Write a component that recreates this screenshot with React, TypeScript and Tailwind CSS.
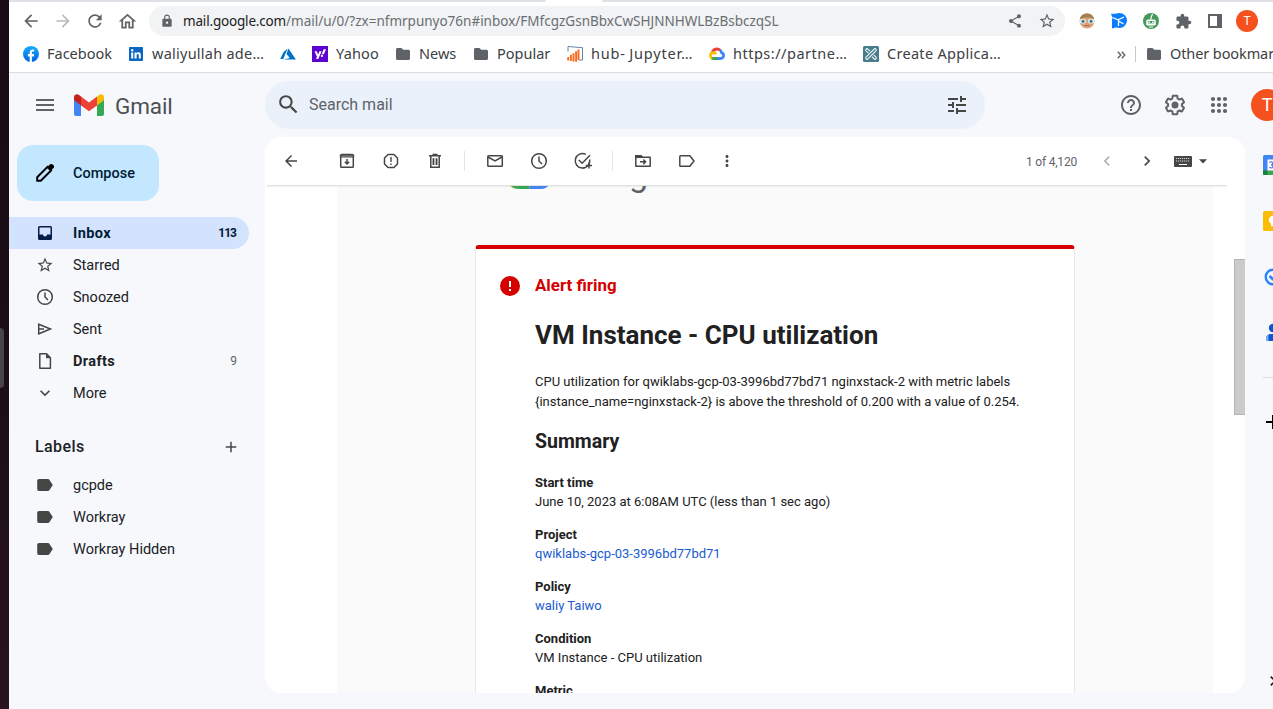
import type { ReactNode } from "react";
import {
  MdArrowBack, MdArrowForward, MdRefresh, MdOutlineHome, MdLock, MdShare, MdStarBorder, MdExtension,
  MdMenu, MdSearch, MdTune, MdHelpOutline, MdApps, MdSchedule, MdMoreVert, MdChevronLeft,
  MdChevronRight, MdExpandMore, MdAdd,
} from "react-icons/md";

function Glyph({ size = 20, className = "", children }: { size?: number; className?: string; children: ReactNode }) {
  return (
    <svg width={size} height={size} viewBox="0 0 20 20" className={`shrink-0 ${className}`} fill="none" stroke="currentColor" strokeWidth="1.5">
      {children}
    </svg>
  );
}

/* ---------- browser chrome ---------- */

const FacebookIcon = () => (
  <svg width="16" height="16" viewBox="0 0 16 16">
    <defs>
      <linearGradient id="fb" x1="0" y1="0" x2="0" y2="1">
        <stop offset="0" stopColor="#18acfe" />
        <stop offset="1" stopColor="#0163e0" />
      </linearGradient>
    </defs>
    <circle cx="8" cy="8" r="8" fill="url(#fb)" />
    <path d="M6.7 15.9V10.4H4.9V8h1.8V6.6c0-2.2 1.2-3.2 2.9-3.2.7 0 1.3.1 1.5.1v2H10c-.9 0-1.1.5-1.1 1.2V8h2.2l-.4 2.4H8.9v5.5z" fill="#fff" />
  </svg>
);
const LinkedInIcon = () => (
  <svg width="16" height="16" viewBox="0 0 16 16">
    <rect x="1" y="1" width="14" height="14" rx="1" fill="#0a66c2" />
    <path d="M3.2 6.4h2v6.2h-2zM6.5 6.4h1.9v.9c.4-.7 1.1-1.1 2-1.1 1.9 0 2.4 1.2 2.4 2.9v3.5h-2V9.5c0-.8-.1-1.6-1-1.6s-1.2.7-1.2 1.6v3.1H6.5z" fill="#fff" />
    <circle cx="4.2" cy="4.2" r="1.2" fill="#fff" />
  </svg>
);
const AzureIcon = () => (
  <svg width="16" height="16" viewBox="0 0 16 16">
    <path d="M7.6 2.4L3.6 6 .2 13h3.1z" fill="#0072c6" />
    <path d="M8.400 2.400L6.5 8l3.300 4.100-6.300 1.400H15.900z" fill="#0072c6" />
  </svg>
);
const YahooIcon = () => (
  <svg width="16" height="16" viewBox="0 0 16 16">
    <rect width="16" height="16" fill="#5f01d1" />
    <path d="M2.5 5.300h2.200l1.400 3.200 1.300-3.200h2.200l-3.300 7.600H4.100l.9-2.100zM11.600 3.300h2.400l-2.100 4.900H9.700z" fill="#fff" />
    <circle cx="9.900" cy="9.900" r="1.100" fill="#fff" />
  </svg>
);
const HubIcon = () => (
  <svg width="16" height="16" viewBox="0 0 16 16">
    <path d="M1 5.500V.5L15.500 1.700v12.300h-3.500" fill="none" stroke="#6b83a3" strokeWidth="1" />
    <path d="M1.200 11v3.500M3.900 8.800v6.200M6.500 7.300v8.200M9.100 5.300V15.700M11.500 3.500v10.500" stroke="#f96a1b" strokeWidth="1.900" />
  </svg>
);
const CloudIcon = () => (
  <svg width="16" height="16" viewBox="0 0 16 16" fill="none" strokeWidth="2.800">
    <path d="M3.300 6.600C3.900 4.400 5.800 3 8 3c1.300 0 2.400.5 3.300 1.300" stroke="#ea4335" />
    <path d="M11.100 4c.9.800 1.400 1.700 1.600 2.900 1.100.3 1.900 1.200 1.900 2.500 0 1.600-1.200 3.100-3 3.100H8" stroke="#4285f4" />
    <path d="M8 12.500H4.300c-.7 0-1.200-.2-1.700-.6" stroke="#34a853" />
    <path d="M3 12.200C1.900 11.600 1.500 10.600 1.500 9.600c0-1.700 1.300-3 3-3 1.200 0 2 .5 2.600 1.400" stroke="#fbbc05" />
  </svg>
);
const CreateIcon = () => (
  <svg width="16" height="16" viewBox="0 0 16 16">
    <rect width="16" height="16" rx="1.500" fill="#477d8c" />
    <g strokeLinecap="round" fill="none">
      <path d="M4 4l8 8" stroke="#fff" strokeWidth="3.600" />
      <path d="M4 4l8 8" stroke="#477d8c" strokeWidth="1.600" />
      <path d="M12 4l-8 8" stroke="#477d8c" strokeWidth="5" />
      <path d="M12 4l-8 8" stroke="#fff" strokeWidth="3.600" />
      <path d="M12 4l-8 8" stroke="#477d8c" strokeWidth="1.600" />
    </g>
  </svg>
);
const Folder = () => (
  <svg width="16" height="16" viewBox="0 0 16 16">
    <path d="M1 3.600C1 2.700 1.700 2 2.500 2h4L8.200 3.700h5.300c.8 0 1.500.7 1.500 1.500v7.300c0 .8-.7 1.500-1.500 1.500h-11C1.700 14 1 13.300 1 12.500z" fill="#5f6368" />
  </svg>
);

const bookmarks = [
  { icon: <FacebookIcon />, text: "Facebook", w: "w-[105px]", t: "" },
  { icon: <LinkedInIcon />, text: "waliyullah ade…", w: "w-[152px]", t: "tracking-[0.25px]" },
  { icon: <AzureIcon />, text: "", w: "w-[32px]", t: "" },
  { icon: <YahooIcon />, text: "Yahoo", w: "w-[83px]", t: "tracking-[0.15px]" },
  { icon: <Folder />, text: "News", w: "w-[78px]", t: "" },
  { icon: <Folder />, text: "Popular", w: "w-[94px]", t: "" },
  { icon: <HubIcon />, text: "hub- Jupyter…", w: "w-[142px]", t: "tracking-[0.8px] [word-spacing:-1px]" },
  { icon: <CloudIcon />, text: "https://partne…", w: "w-[154px]", t: "tracking-[0.5px]" },
  { icon: <CreateIcon />, text: "Create Applica…", w: "w-[150px]", t: "tracking-[0.3px]" },
];

function Browser() {
  return (
    <header className="h-[73px] border-b border-[#d9dbdf] bg-white font-['Noto_Sans',sans-serif]">
      <div className="flex h-[2px] justify-between">
        <div className="w-[537px] rounded-br-[2px] bg-[#dee1e6]" />
        <div className="w-[671px] rounded-bl-[2px] bg-[#dee1e6]" />
      </div>
      <div className="flex h-[38px] items-center pl-3 text-[#5f6368]">
        <div className="flex w-[128px] items-center gap-3">
          <MdArrowBack size={20} />
          <MdArrowForward size={20} className="text-[#babcbe]" />
          <MdRefresh size={20} />
          <MdOutlineHome size={21} />
        </div>
        <div className="flex h-[30px] w-[916px] items-center rounded-full bg-[#f1f3f4] pl-[11px] pr-[9px]">
          <MdLock size={14} className="shrink-0" />
          <div className="ml-[9px] flex-1 whitespace-nowrap text-[13.5px] leading-5 text-[#6a6e73]">
            <span className="tracking-[-0.18px] text-[#202124]">mail.google.com</span>
            <span>/mail/u/0/?zx=nfmrpunyo76n#inbox/FMfcgzGsnBbxCwSHJNNHWLBzBsbczqSL</span>
          </div>
          <MdShare size={16} className="mr-[15px]" />
          <MdStarBorder size={18} />
        </div>
        <div className="ml-[14px] flex items-center gap-4">
          <svg width="16" height="16" viewBox="0 0 16 16">
            <circle cx="8" cy="8" r="7.500" fill="#d9a07c" />
            <path d="M.8 6C1.500 2.500 4.500.4 8 .4S14.500 2.500 15.200 6L11 4.500H5z" fill="#a08050" />
            <rect x=".5" y="6" width="6.500" height="4.600" rx="2" fill="#dff0f2" />
            <rect x="9" y="6" width="6.500" height="4.600" rx="2" fill="#dff0f2" />
            <circle cx="4" cy="8.300" r="1.500" fill="#42707c" />
            <circle cx="12" cy="8.300" r="1.500" fill="#42707c" />
            <path d="M5.500 12.500h5" stroke="#b3664c" />
          </svg>
          <svg width="16" height="16" viewBox="0 0 16 16">
            <circle cx="8.500" cy="7.500" r="7.500" fill="#0a7cff" />
            <path d="M0 .8h6v4H1.500zM1 8h5l-1 6.500L1 15.500z" fill="#0a7cff" />
            <path d="M1.500 4.500l5.500 2.300 6-2.800M7.500 7v6M7.500 8l5 3" stroke="#fff" strokeWidth="1.300" fill="none" />
          </svg>
          <svg width="16" height="16" viewBox="0 0 16 16">
            <circle cx="8" cy="8" r="8" fill="#439a5a" />
            <rect x="3.200" y="6.500" width="9.600" height="6" rx="1.500" fill="#fff" />
            <path d="M8 6.500V4.500L9.500 1" stroke="#fff" strokeWidth="1.200" fill="none" />
            <path d="M4.800 8h6.400v2.400H4.800z" fill="#439a5a" />
            <path d="M5.500 8.500h1.400v1.400H5.500zM9.100 8.500h1.400v1.400H9.100z" fill="#fff" />
            <path d="M6 14h4" stroke="#fff" />
          </svg>
          <MdExtension size={17} className="-mx-[.5px]" />
          <svg width="16" height="16" viewBox="0 0 16 16">
            <path d="M1 1h14v14H1zM3 3v10h7V3z" fill="#5f6368" fillRule="evenodd" />
          </svg>
          <div className="-ml-[3px] flex size-[22px] items-center justify-center rounded-full bg-[#f4511e] font-[Roboto] text-[12px] leading-none text-white">T</div>
        </div>
      </div>
      <div className="flex h-[28px] items-center pl-[14px] text-[14.5px] text-[#3c4043]">
        {bookmarks.map((b, i) => (
          <div key={i} className={`flex shrink-0 items-center gap-2 whitespace-nowrap ${b.w}`}>
            {b.icon}
            <span className={b.t}>{b.text}</span>
          </div>
        ))}
        <svg width="9" height="8" viewBox="0 0 9 8" className="ml-[104px] mt-px shrink-0" fill="none" stroke="#5f6368" strokeWidth="1.400">
          <path d="M.8.800L3.800 4 .8 7.200M4.800.800L7.800 4 4.800 7.200" />
        </svg>
        <div className="ml-[9px] h-4 w-px shrink-0 bg-[#c6c9cc]" />
        <div className="ml-[10px] flex shrink-0 items-center gap-2 whitespace-nowrap tracking-[-0.1px]">
          <Folder />
          Other bookmarks
        </div>
      </div>
    </header>
  );
}

/* ---------- mail header ---------- */

const GmailMark = () => (
  <svg width="30" height="22" viewBox="0 0 30 22">
    <path d="M0 5h7V22H2a2 2 0 0 1-2-2z" fill="#4285f4" />
    <path d="M23 5h7V20a2 2 0 0 1-2 2h-5z" fill="#34a853" />
    <path d="M23 2.500l2-1.500c2-1.500 5-.5 5 2.200V6l-7 5.500z" fill="#fbbc04" />
    <path d="M7 11.500v-9L15 8.500l8-6v9L15 17.300z" fill="#ea4335" />
    <path d="M0 3.200C0 .5 3 -.5 5 1l2 1.500v9L0 6z" fill="#c5221f" />
  </svg>
);

const Gear = () => (
  <svg width="24" height="24" viewBox="0 0 24 24" fill="#5f6368">
    <path d="M13.850 22.250h-3.700c-.74 0-1.360-.54-1.450-1.270l-.27-1.890c-.27-.14-.53-.29-.79-.46l-1.800.720c-.7.260-1.470-.030-1.810-.650L2.200 15.530c-.35-.66-.2-1.440.36-1.880l1.530-1.190c-.01-.15-.02-.3-.02-.46 0-.15.010-.31.020-.46l-1.520-1.190c-.59-.45-.74-1.260-.37-1.880l1.850-3.190c.34-.62 1.110-.9 1.790-.63l1.810.73c.26-.17.52-.32.78-.46l.27-1.910c.09-.7.710-1.250 1.440-1.250h3.700c.74 0 1.360.54 1.450 1.270l.27 1.890c.27.14.53.29.79.46l1.800-.72c.71-.26 1.480.030 1.820.650l1.840 3.180c.36.66.2 1.440-.36 1.880l-1.520 1.190c.1.150.2.300.2.460s-.1.310-.2.460l1.520 1.190c.56.450.72 1.230.37 1.860l-1.860 3.220c-.34.62-1.110.9-1.800.63l-1.800-.72c-.26.17-.52.32-.78.460l-.27 1.910c-.1.680-.72 1.220-1.460 1.220zm-3.230-2h2.760l.37-2.550.53-.22c.44-.18.88-.44 1.340-.78l.45-.34 2.380.96 1.380-2.400-2.030-1.580.070-.56c.03-.26.060-.51.060-.78s-.03-.53-.06-.78l-.07-.56 2.030-1.580-1.390-2.400-2.390.96-.45-.35c-.42-.32-.87-.58-1.330-.77l-.52-.22-.37-2.550h-2.760l-.37 2.550-.53.210c-.44.190-.88.440-1.340.790l-.45.330-2.380-.95-1.390 2.390 2.030 1.580-.07.560a7 7 0 0 0-.06.790c0 .26.020.53.060.78l.07.560-2.030 1.580 1.380 2.400 2.390-.96.450.35c.43.330.86.580 1.330.77l.53.220z" />
    <circle cx="12" cy="12" r="3.500" />
  </svg>
);

function MailHeader() {
  return (
    <div className="flex h-16 items-center text-[#5f6368]">
      <div className="flex w-[256px] shrink-0 items-center pl-6">
        <MdMenu size={24} />
        <div className="ml-[17px] flex items-center gap-[11px]">
          <GmailMark />
          <span className="pt-px text-[22.5px] leading-6 tracking-[-0.1px] text-[#4d5054]">Gmail</span>
        </div>
      </div>
      <div className="flex h-12 w-[720px] shrink-0 items-center rounded-full bg-[#eaf1fb] pl-[11px] pr-4 text-[#444746]">
        <MdSearch size={25} className="-mt-px" />
        <span className="ml-2 flex-1 text-base leading-6 text-[#5f6368]">Search mail</span>
        <MdTune size={24} className="-mt-px" />
      </div>
      <div className="ml-[134px] flex shrink-0 items-center gap-5 text-[#5f6368]">
        <MdHelpOutline size={24} />
        <Gear />
        <svg width="24" height="24" viewBox="0 0 24 24" fill="currentColor">
          {[6, 12, 18].map((y) => [6, 12, 18].map((x) => <circle key={`${x}-${y}`} cx={x} cy={y} r="2.100" />))}
        </svg>
        <div className="flex size-8 items-center justify-center rounded-full bg-[#f4511e] text-[18px] leading-none text-white">T</div>
      </div>
    </div>
  );
}

/* ---------- sidebar ---------- */

const InboxIcon = () => (
  <svg width="20" height="20" viewBox="0 0 20 20">
    <path d="M4.500 3h11A1.500 1.500 0 0 1 17 4.500v11a1.500 1.500 0 0 1-1.500 1.500h-11A1.500 1.500 0 0 1 3 15.500v-11A1.500 1.500 0 0 1 4.500 3zm0 1.500V11.500H8c0 1.100.9 2 2 2s2-.9 2-2h3.500V4.500z" fill="#041e49" fillRule="evenodd" />
  </svg>
);
const ClockIcon = () => (
  <Glyph>
    <circle cx="10" cy="10" r="7.300" />
    <path d="M10 5.500V10l3 3" />
  </Glyph>
);
const SendIcon = () => (
  <Glyph>
    <path d="M3.700 5.200L15.500 10 3.700 14.800z M4 10h5" />
  </Glyph>
);
const FileIcon = () => (
  <Glyph>
    <path d="M4.800 2.800h6.700l3.900 4v10.400H4.800z" strokeLinejoin="round" />
    <path d="M11 2.500V7.300h4.700z" fill="currentColor" stroke="none" />
  </Glyph>
);

const folders = [
  { icon: <InboxIcon />, name: "Inbox", count: "113", kind: "active" },
  { icon: <MdStarBorder size={18} className="mx-px" />, name: "Starred", count: "", kind: "" },
  { icon: <ClockIcon />, name: "Snoozed", count: "", kind: "" },
  { icon: <SendIcon />, name: "Sent", count: "", kind: "" },
  { icon: <FileIcon />, name: "Drafts", count: "9", kind: "bold" },
  { icon: <MdExpandMore size={20} />, name: "More", count: "", kind: "" },
];

function Sidebar() {
  return (
    <nav className="w-[256px] shrink-0 text-[14.5px] text-[#202124]">
      <div className="ml-2 mt-2 flex h-14 w-[142px] items-center rounded-2xl bg-[#c2e7ff] pl-[18px]">
        <svg width="20" height="20" viewBox="0 0 20 20" fill="none">
          <path d="M2.200 14.200L12.500 3.900l3.600 3.600L5.800 17.800H2.200z" stroke="#000" strokeWidth="2" />
          <path d="M11.800 4.600l3-3c1-1 2.300-.7 3 0l.7.700c.8.800.8 2 0 2.800l-3 3z" fill="#000" />
        </svg>
        <span className="ml-[18px] pt-0.5 font-medium text-[#001d35]">Compose</span>
      </div>
      <ul className="mt-4">
        {folders.map((f) => (
          <li
            key={f.name}
            className={`flex h-8 w-[240px] items-center rounded-r-full pl-[26px] pr-3 ${f.kind === "active" ? "bg-[#d3e3fd] text-[#001d35]" : "text-[#202124]"}`}
          >
            <span className="flex w-[38px] text-[#444746]">{f.icon}</span>
            <span className={`flex-1 pt-0.5 ${f.kind ? "font-bold tracking-[0.4px]" : ""}`}>{f.name}</span>
            <span className={`text-xs ${f.kind === "active" ? "pr-px font-bold tracking-[-1px]" : "text-[#5f6368]"}`}>{f.count}</span>
          </li>
        ))}
      </ul>
      <div className="mt-[22px] flex h-[32px] items-center justify-between pl-[26px] pr-[9px]">
        <span className="text-base font-medium tracking-[0.4px]">Labels</span>
        <MdAdd size={18} className="mr-4 text-[#444746]" />
      </div>
      <ul className="mt-[6px]">
        {["gcpde", "Workray", "Workray Hidden"].map((l) => (
          <li key={l} className="flex h-8 items-center pl-[26px]">
            <svg width="20" height="20" viewBox="0 0 20 20">
              <path d="M4 4h9c.6 0 1.100.3 1.400.7L17.800 10l-3.400 5.300c-.3.400-.8.700-1.400.7H4a2 2 0 0 1-1.800-2V6C2.200 4.900 3 4 4 4z" fill="#444746" />
            </svg>
            <span className="ml-[18px] pt-0.5">{l}</span>
          </li>
        ))}
      </ul>
    </nav>
  );
}

/* ---------- message ---------- */

const Archive = () => (
  <Glyph>
    <path d="M3.700 6v9.500c0 .4.300.8.800.8h11c.4 0 .8-.4.800-.8V6" />
    <path d="M3.500 6V4.500l1-1h11l1 1V6" strokeLinejoin="round" />
    <path d="M3.500 6h13V4h-13z" fill="currentColor" fillOpacity=".5" strokeWidth="1" />
    <path d="M10 8v4M7.800 10.700L10 13l2.200-2.300" />
  </Glyph>
);
const Spam = () => (
  <Glyph>
    <path d="M7 3.500h6L16.500 7v6L13 16.500H7L3.500 13V7z" strokeLinejoin="round" />
    <path d="M10 6v5M10 12.500V14" strokeWidth="1.400" />
  </Glyph>
);
const Trash = () => (
  <Glyph>
    <path d="M4 4.700h12M7.500 3.500h5M5.800 5v11.200h8.400V5M8.300 7.300v6.700M11.700 7.300v6.700" />
    <path d="M8.300 7.300h3.400v6.700H8.300z" fill="currentColor" fillOpacity=".35" stroke="none" />
  </Glyph>
);
const Mail = () => (
  <Glyph>
    <rect x="2.800" y="4.700" width="14.500" height="10.600" rx=".8" />
    <path d="M3 6l7 4 7-4" />
  </Glyph>
);
const AddTask = () => (
  <Glyph>
    <path d="M16.700 8.500A7.300 7.300 0 1 1 12.800 3.300M9.600 17.200c.9 0 1.600-.1 2.400-.4" />
    <path d="M5.800 9l3.300 3.300L17 4.300M16 11.200v6.300M12.800 14.400h6.300" />
  </Glyph>
);
const MoveTo = () => (
  <Glyph>
    <path d="M2.800 4.700h5l1.500 1.600h7.900v9H2.800z" strokeLinejoin="round" />
    <path d="M2.800 4.700h5l1.500 1.600H2.800z" fill="currentColor" />
    <path d="M7 10.800h5M10.300 8.500l2.300 2.300-2.300 2.300" />
  </Glyph>
);
const Tag = () => (
  <Glyph>
    <path d="M3.600 4.700h9.200L17 10l-4.200 5.300H3.600a.8.800 0 0 1-.8-.8v-9c0-.4.300-.8.800-.8z" strokeLinejoin="round" />
  </Glyph>
);

function Toolbar() {
  return (
    <div className="flex h-12 shrink-0 items-center pl-[17px] text-[#444746]">
      <MdArrowBack size={18} className="mr-[37px]" />
      <div className="flex items-center gap-6">
        <Archive />
        <Spam />
        <Trash />
      </div>
      <div className="mx-[19px] mr-[20px] h-5 w-px bg-[#e3e5e8]" />
      <div className="flex items-center gap-6">
        <Mail />
        <ClockIcon />
        <AddTask />
      </div>
      <div className="ml-[19px] mr-[20px] h-5 w-px bg-[#e3e5e8]" />
      <div className="flex items-center gap-6">
        <MoveTo />
        <Tag />
      </div>
      <MdMoreVert size={18} className="ml-[21px]" />
      <span className="ml-auto mr-5 pt-px text-xs tracking-[-0.2px] text-[#5f6368]">1 of 4,120</span>
      <MdChevronLeft size={20} className="mr-5 text-[#b4b5b5]" />
      <MdChevronRight size={20} className="mr-[17px]" />
      <svg width="18" height="11" viewBox="0 0 18 11" className="mt-px">
        <rect width="18" height="11" rx="1" fill="#444746" />
        <path d="M2 2.500h14M2 5h14" stroke="#fff" strokeOpacity=".75" strokeWidth="1" strokeDasharray="1.200 .8" />
        <path d="M5 8.500h8" stroke="#fff" strokeWidth="1" />
      </svg>
      <svg width="8" height="5" viewBox="0 0 8 5" className="ml-[7px] mr-[38px] mt-px">
        <path d="M0 .3h8L4 4.500z" fill="#444746" />
      </svg>
    </div>
  );
}

const details = [
  { k: "Start time", v: "June 10, 2023 at 6:08AM UTC (less than 1 sec ago)", link: false },
  { k: "Project", v: "qwiklabs-gcp-03-3996bd77bd71", link: true },
  { k: "Policy", v: "waliy Taiwo", link: true },
  { k: "Condition", v: "VM Instance - CPU utilization", link: false },
  { k: "Metric", v: "", link: false },
];

function Email() {
  return (
    <div className="flex min-h-0 flex-1 pl-[72px]">
      <div className="flex w-[876px] flex-col items-center overflow-hidden bg-[#fafafa]">
        <div className="flex h-[60px] w-[600px] shrink-0 items-start overflow-hidden pl-[33px]">
          <svg width="44" height="6" viewBox="0 0 44 6">
            <path d="M1 0h6v3.500C4 2.500 2 1.500 1 0z" fill="#fbbc05" />
            <path d="M2.500 0h19v4H11C7 4 4.500 2.500 2.500 0z" fill="#34a853" />
            <path d="M21.500 0h19.500c-2 2.500-4.500 4-8 4H21.500z" fill="#4285f4" />
          </svg>
          <span className="-mt-[29px] ml-[77px] text-[34px] leading-9 text-[#5f6368]">g</span>
        </div>
        <article className="min-h-0 w-[600px] flex-1 overflow-hidden rounded-t-[4px] border border-b-0 border-[#e8e8e8] border-t-4 border-t-[#d50000] bg-white pl-6 pt-[26px] text-[13px] leading-5 text-[#212121]">
          <div className="flex h-[22px] items-center">
            <svg width="20" height="20" viewBox="0 0 20 20">
              <circle cx="10" cy="10" r="10" fill="#d50000" />
              <path d="M9 5h2v6H9zM9 13h2v2H9z" fill="#fff" />
            </svg>
            <span className="ml-[15px] pb-0.5 text-[16.9px] font-bold text-[#d50000]">Alert firing</span>
          </div>
          <div className="pl-[35px]">
            <h1 className="mt-[22px] text-[26px] font-bold leading-8">VM Instance - CPU utilization</h1>
            <p className="mt-[21px] whitespace-nowrap">
              CPU utilization for qwiklabs-gcp-03-3996bd77bd71 nginxstack-2 with metric labels
              <br />
              {"{instance_name=nginxstack-2} is above the threshold of 0.200 with a value of 0.254."}
            </p>
            <h2 className="mt-[18px] text-[19.5px] font-bold leading-6">Summary</h2>
            <dl className="mt-[19px]">
              {details.map((d) => (
                <div key={d.k} className="h-[52px] leading-[19px]">
                  <dt className="font-bold">{d.k}</dt>
                  <dd className={d.link ? "text-[#1a5bd0]" : ""}>{d.v}</dd>
                </div>
              ))}
            </dl>
          </div>
        </article>
      </div>
      <div className="ml-auto w-[11px] pt-[74px]">
        <div className="h-[156px] border border-r-0 border-[#b4b4b4] bg-[#cbcbcb]" />
      </div>
    </div>
  );
}

/* ---------- side panel ---------- */

function SidePanel() {
  return (
    <aside className="ml-[18px] flex w-5 shrink-0 flex-col pt-[18px]">
      <svg width="20" height="20" viewBox="0 0 20 20">
        <rect width="20" height="20" rx="1.500" fill="#4285f4" />
        <path d="M0 15.500h20V20H1.500A1.500 1.500 0 0 1 0 18.500z" fill="#34a853" />
        <path d="M0 15.500h4.500V20h-3A1.500 1.500 0 0 1 0 18.500z" fill="#188038" />
        <rect x="4.500" y="4.500" width="11" height="11" fill="#fff" />
        <path d="M6.500 7.500c1-1.200 3.200-.8 3.200.8 0 1.100-.8 1.500-1.700 1.500 1.100 0 2 .5 2 1.600 0 1.900-2.600 2-3.600.7" stroke="#4285f4" strokeWidth="1.200" fill="none" />
      </svg>
      <svg width="20" height="20" viewBox="0 0 20 20" className="mt-9">
        <rect width="20" height="20" rx="1.500" fill="#fbbc04" />
        <circle cx="10" cy="9" r="4.200" fill="#fff" />
        <path d="M8 12h4v3.200H8z" fill="#fff" />
      </svg>
      <svg width="20" height="20" viewBox="0 0 20 20" className="mt-9">
        <circle cx="10" cy="10" r="7.300" stroke="#2684fc" strokeWidth="2.400" fill="none" />
        <path d="M6.500 9l3 3 7-7" stroke="#2684fc" strokeWidth="2.600" fill="none" />
      </svg>
      <svg width="20" height="20" viewBox="0 0 20 20" className="mt-9">
        <circle cx="10" cy="5" r="4.200" fill="#0b57d0" />
        <path d="M3 18v-2.500C3 12.500 5.500 11 8 11h4c2.500 0 5 1.500 5 4.500V18z" fill="#0b57d0" />
        <path d="M3 18v-3c0-1.500.8-3 2.500-3.600V18z" fill="#7baaf7" />
      </svg>
      <div className="mt-[34px] h-px bg-[#dadce0]" />
      <svg width="20" height="20" viewBox="0 0 20 20" className="mt-[34px]">
        <path d="M10 3v14M3 10h14" stroke="#000" strokeWidth="2" />
      </svg>
      <MdChevronRight size={20} className="mt-[239px] text-[#202124]" />
    </aside>
  );
}

export default function App() {
  return (
    <div className="flex h-[709px] w-[1273px] overflow-hidden bg-[#f6f8fc] font-[Roboto,sans-serif]">
      <div className="flex w-[9px] shrink-0 items-center bg-linear-to-b from-[#180b13] via-[#1c0e15] to-[#27141e]">
        <div className="mt-[7px] h-[60px] w-1 rounded-r-[4px] bg-[#494246]" />
      </div>
      <div className="w-[1264px] shrink-0">
        <Browser />
        <MailHeader />
        <div className="flex h-[556px]">
          <Sidebar />
          <main className="flex w-[980px] shrink-0 flex-col overflow-hidden rounded-2xl bg-white">
            <Toolbar />
            <div className="relative z-10 ml-[2px] h-px w-[960px] shrink-0 bg-[#e2e2e3] shadow-[0_1px_1px_rgba(100,121,143,0.12)]" />
            <div className="-mt-px flex min-h-0 flex-1">
              <Email />
            </div>
          </main>
          <SidePanel />
        </div>
      </div>
    </div>
  );
}
